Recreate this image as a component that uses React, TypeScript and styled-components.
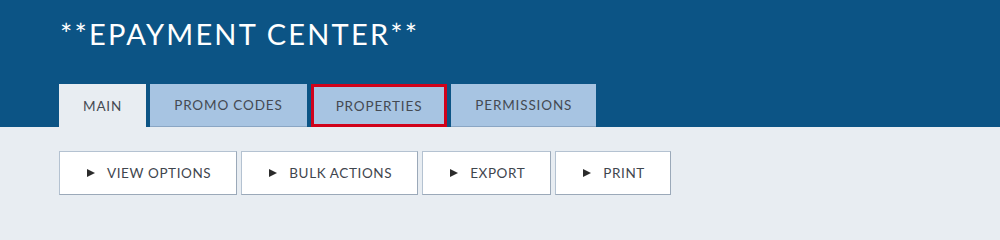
import React from "react";
import styled, { createGlobalStyle } from "styled-components";

const Global = createGlobalStyle`
  html, body { margin: 0; padding: 0; background: #e8edf2; }
  body { font-family: "Lato", "Open Sans", sans-serif; }
`;

const Header = styled.header`
  background: #0c5485;
  padding: 16px 0 0 59px;
  display: flex;
  flex-direction: column;
`;

const Title = styled.h1`
  margin: 0 0 0 1px;
  color: #ffffff;
  font-family: "Lato", sans-serif;
  font-weight: 400;
  font-size: 29px;
  line-height: 36px;
  letter-spacing: 2.2px;
`;

const Tabs = styled.nav`
  display: flex;
  gap: 4px;
  margin-top: 32px;
`;

const Tab = styled.div<{ $active?: boolean; $focused?: boolean }>`
  box-sizing: border-box;
  height: 43px;
  display: flex;
  align-items: center;
  background: ${(p) => (p.$active ? "#e8edf2" : "#a7c4e2")};
  border: ${(p) => (p.$focused ? "3px solid #d0021b" : "none")};
  border-bottom: ${(p) =>
    p.$focused ? "3px solid #d0021b" : p.$active ? "none" : "1px solid #8aa6c4"};
  padding: ${(p) => (p.$focused ? "0 22px" : "0 24px")};
  color: #444a52;
  font-family: "Lato", sans-serif;
  font-size: 13.5px;
  letter-spacing: 0.85px;
`;

const Content = styled.main`
  padding: 24px 0 16px 59px;
  display: flex;
  gap: 4px;
`;

const Button = styled.button`
  box-sizing: border-box;
  height: 44px;
  padding: 0 25px 0 27px;
  display: flex;
  align-items: center;
  gap: 12px;
  background: #ffffff;
  border: 1px solid #b4c2d1;
  border-right-color: #9ba9b9;
  border-bottom-color: #9ba9b9;
  color: #3f464e;
  font-family: "Lato", sans-serif;
  font-size: 13.5px;
  letter-spacing: 0.6px;
  cursor: pointer;
`;

const Arrow = styled.span`
  width: 0;
  height: 0;
  border-top: 4.5px solid transparent;
  border-bottom: 4.5px solid transparent;
  border-left: 8px solid #2b2b2b;
`;

const tabs = [
  { label: "MAIN", active: true },
  { label: "PROMO CODES" },
  { label: "PROPERTIES", focused: true },
  { label: "PERMISSIONS" },
];

const actions = ["VIEW OPTIONS", "BULK ACTIONS", "EXPORT", "PRINT"];

export default function App() {
  return (
    <>
      <Global />
      <Header>
        <Title>**EPAYMENT CENTER**</Title>
        <Tabs>
          {tabs.map((t) => (
            <Tab key={t.label} $active={t.active} $focused={t.focused}>
              {t.label}
            </Tab>
          ))}
        </Tabs>
      </Header>
      <Content>
        {actions.map((a) => (
          <Button key={a}>
            <Arrow />
            {a}
          </Button>
        ))}
      </Content>
    </>
  );
}
